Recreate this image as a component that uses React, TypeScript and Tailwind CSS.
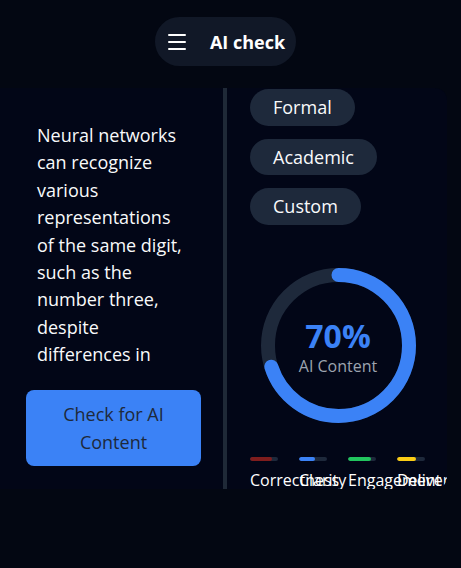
import { Menu } from "lucide-react";

const tones = ["Formal", "Academic", "Custom"];

const metrics = [
  { label: "Correctness", value: 78, color: "bg-[#7f1d1d]" },
  { label: "Clarity", value: 57, color: "bg-[#3b82f6]" },
  { label: "Engagement", value: 82, color: "bg-[#22c55e]" },
  { label: "Delivery", value: 67, color: "bg-[#facc15]" },
];

function ScoreRing({ percent }: { percent: number }) {
  const r = 70.5;
  const circumference = 2 * Math.PI * r;
  return (
    <div className="relative h-[155px] w-[155px]">
      <svg width="155" height="155" viewBox="0 0 155 155" className="-rotate-90">
        <circle cx="77.5" cy="77.5" r={r} fill="none" stroke="#1e293b" strokeWidth="14" />
        <circle
          cx="77.5"
          cy="77.5"
          r={r}
          fill="none"
          stroke="#3b82f6"
          strokeWidth="14"
          strokeLinecap="round"
          strokeDasharray={circumference}
          strokeDashoffset={circumference * (1 - percent / 100)}
        />
      </svg>
      <div className="absolute inset-0 flex flex-col items-center justify-center pt-[6px]">
        <span className="text-[32px] font-bold leading-9 text-[#3b82f6]">{percent}%</span>
        <span className="text-base leading-6 text-[#9ca3af]">AI Content</span>
      </div>
    </div>
  );
}

export default function App() {
  return (
    <div className="min-h-screen bg-[#030712] font-['Segoe_UI','Open_Sans',sans-serif]">
      <header className="flex justify-center pr-[10px] pt-[17px] pb-[22px]">
        <div className="flex h-[49px] items-center gap-[21px] rounded-full bg-[#111827] pl-[10px] pr-[11px]">
          <Menu size={24} strokeWidth={2} className="text-white" />
          <span className="text-lg font-bold text-white">AI check</span>
        </div>
      </header>

      <main className="flex h-[401px] w-[447px] overflow-hidden rounded-r-xl bg-[#020617]">
        <section className="flex w-[223px] shrink-0 flex-col pl-[26px] pr-[22px] pt-[34px]">
          <p className="h-[246.6px] shrink-0 overflow-hidden px-[11px] text-lg leading-[27.4px] text-[#f9fafb]">
            Neural networks can recognize various representations of the same digit, such as the
            number three, despite differences in handwriting, size, and style.
          </p>
          <button
            type="button"
            className="mt-[21px] h-[76px] shrink-0 rounded-lg bg-[#3b82f6] px-4 text-lg leading-7 text-[#1e293b]"
          >
            Check for AI Content
          </button>
        </section>

        <div className="w-[4px] shrink-0 bg-[#1f2937]" />

        <section className="w-[220px] shrink-0 pl-[23px] pr-[21px] pt-[1px]">
          <div className="flex flex-col items-start gap-[13px]">
            {tones.map((tone) => (
              <span
                key={tone}
                className="flex h-[36.5px] items-center rounded-full bg-[#1e293b] px-[23px] text-lg text-[#f9fafb]"
              >
                {tone}
              </span>
            ))}
          </div>

          <div className="mt-[43px] flex justify-center">
            <ScoreRing percent={70} />
          </div>

          <div className="mt-[34px] flex gap-[21px]">
            {metrics.map((m) => (
              <div key={m.label} className="w-[28px] shrink-0">
                <div className="h-[4px] w-full overflow-hidden rounded-full bg-[#1e293b]">
                  <div className={`h-full rounded-full ${m.color}`} style={{ width: `${m.value}%` }} />
                </div>
                <div className="mt-[7px] whitespace-nowrap text-base leading-6 text-white">{m.label}</div>
              </div>
            ))}
          </div>
        </section>
      </main>
    </div>
  );
}
